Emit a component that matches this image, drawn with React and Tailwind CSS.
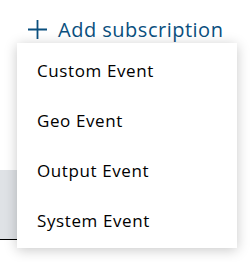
import React from "react";

export default function App() {
  const items = ["Custom Event", "Geo Event", "Output Event", "System Event"];
  return (
    <div
      className="relative w-[250px] h-[262px] bg-white overflow-hidden"
      style={{ fontFamily: '"Open Sans", "Liberation Sans", sans-serif' }}
    >
      <div className="flex items-center gap-[10px] pl-[27px] pt-[17px] h-[42px] text-[#0a4f7e]">
        <svg width="21" height="21" viewBox="0 0 21 21" fill="none">
          <path d="M10.5 1v19M1 10.5h19" stroke="#0a4f7e" strokeWidth="1.8" />
        </svg>
        <span className="text-[20px] leading-none tracking-[0.5px]">Add subscription</span>
      </div>
      <div className="mt-[128px] w-[200px] h-[70px] bg-[#dfe2e6] border-b border-black" />

      <div className="absolute left-[17px] top-[43px] w-[220px] bg-white py-[2.5px] shadow-[0_2px_12px_rgba(0,0,0,0.22)]">
        {items.map((t) => (
          <div
            key={t}
            className="h-[50px] flex items-center px-[20px] text-[17px] tracking-[0.6px] text-black"
          >
            {t}
          </div>
        ))}
      </div>
    </div>
  );
}
